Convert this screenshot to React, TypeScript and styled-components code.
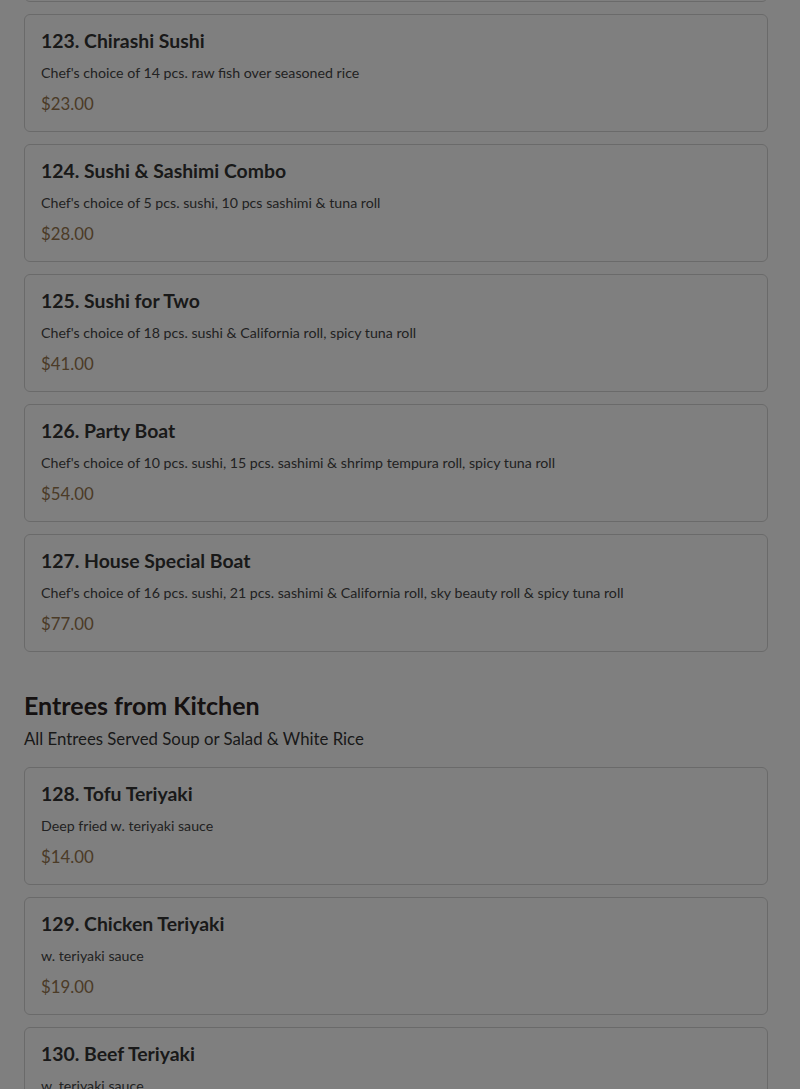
import React from "react";
import styled, { createGlobalStyle } from "styled-components";

const GlobalStyle = createGlobalStyle`
  html, body { margin: 0; padding: 0; background: #ffffff; }
  body { font-family: "Lato", "Noto Sans", sans-serif; overflow: hidden; }
`;

const Page = styled.div`
  padding: 0 32px 0 24px;
  margin-top: -116px;
`;

const Section = styled.section<{ $first?: boolean }>`
  padding-top: ${(p) => (p.$first ? "0" : "25px")};
`;

const SectionTitle = styled.h2`
  margin: 0;
  font-size: 25px;
  line-height: 32px;
  font-weight: 700;
  color: #2a2222;
`;

const SectionNote = styled.p`
  margin: 6px 0 16px;
  font-size: 16.8px;
  line-height: 24px;
  color: #333;
`;

const Card = styled.article`
  border: 1px solid #d4d4d4;
  border-radius: 6px;
  padding: 16px;
  margin-bottom: 12px;
  background: #fff;
`;

const ItemName = styled.h3`
  margin: 0;
  font-size: 19.4px;
  line-height: 20px;
  font-weight: 700;
  color: #333;
`;

const ItemDesc = styled.p`
  margin: 12px 0 0;
  font-size: 14.2px;
  line-height: 20px;
  color: #444;
`;

const ItemPrice = styled.div`
  margin-top: 10px;
  font-size: 16.8px;
  line-height: 22px;
  color: #96764e;
`;

const Overlay = styled.div`
  position: fixed;
  inset: 0;
  background: rgba(0, 0, 0, 0.5);
`;

type Item = { name: string; desc: string; price: string };

const sushi: Item[] = [
  { name: "122. Sashimi Deluxe", desc: "Chef's choice of 21 pcs. sashimi", price: "$30.00" },
  { name: "123. Chirashi Sushi", desc: "Chef's choice of 14 pcs. raw fish over seasoned rice", price: "$23.00" },
  { name: "124. Sushi & Sashimi Combo", desc: "Chef's choice of 5 pcs. sushi, 10 pcs sashimi & tuna roll", price: "$28.00" },
  { name: "125. Sushi for Two", desc: "Chef's choice of 18 pcs. sushi & California roll, spicy tuna roll", price: "$41.00" },
  { name: "126. Party Boat", desc: "Chef's choice of 10 pcs. sushi, 15 pcs. sashimi & shrimp tempura roll, spicy tuna roll", price: "$54.00" },
  { name: "127. House Special Boat", desc: "Chef's choice of 16 pcs. sushi, 21 pcs. sashimi & California roll, sky beauty roll & spicy tuna roll", price: "$77.00" },
];

const entrees: Item[] = [
  { name: "128. Tofu Teriyaki", desc: "Deep fried w. teriyaki sauce", price: "$14.00" },
  { name: "129. Chicken Teriyaki", desc: "w. teriyaki sauce", price: "$19.00" },
  { name: "130. Beef Teriyaki", desc: "w. teriyaki sauce", price: "$21.00" },
];

const MenuCard = ({ item }: { item: Item }) => (
  <Card>
    <ItemName>{item.name}</ItemName>
    <ItemDesc>{item.desc}</ItemDesc>
    <ItemPrice>{item.price}</ItemPrice>
  </Card>
);

export default function App() {
  return (
    <>
      <GlobalStyle />
      <Page>
        <Section $first>
          {sushi.map((it) => (
            <MenuCard key={it.name} item={it} />
          ))}
        </Section>
        <Section>
          <SectionTitle>Entrees from Kitchen</SectionTitle>
          <SectionNote>All Entrees Served Soup or Salad &amp; White Rice</SectionNote>
          {entrees.map((it) => (
            <MenuCard key={it.name} item={it} />
          ))}
        </Section>
      </Page>
      <Overlay />
    </>
  );
}
